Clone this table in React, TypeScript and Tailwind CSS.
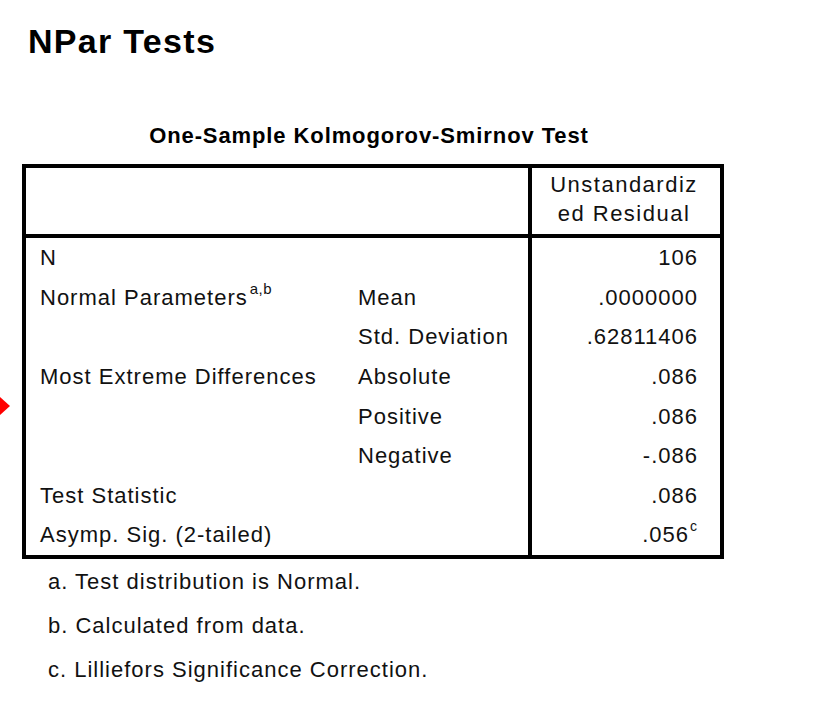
import React from "react";

type Row = {
  label: string;
  labelSup?: string;
  sub: string;
  value: string;
  valueSup?: string;
};

const ROWS: Row[] = [
  { label: "N", sub: "", value: "106" },
  { label: "Normal Parameters", labelSup: "a,b", sub: "Mean", value: ".0000000" },
  { label: "", sub: "Std. Deviation", value: ".62811406" },
  { label: "Most Extreme Differences", sub: "Absolute", value: ".086" },
  { label: "", sub: "Positive", value: ".086" },
  { label: "", sub: "Negative", value: "-.086" },
  { label: "Test Statistic", sub: "", value: ".086" },
  { label: "Asymp. Sig. (2-tailed)", sub: "", value: ".056", valueSup: "c" },
];

const NOTES = [
  "a. Test distribution is Normal.",
  "b. Calculated from data.",
  "c. Lilliefors Significance Correction.",
];

export default function App() {
  return (
    <div
      className="relative w-[816px] h-[718px] overflow-hidden bg-white text-black"
      style={{ fontFamily: '"Liberation Sans", Arial, sans-serif' }}
    >
      {/* red output marker on the left edge */}
      <div className="absolute left-0 top-[397px] w-0 h-0 border-y-[9px] border-y-transparent border-l-[10px] border-l-[#ff0000]" />

      <h1 className="pl-[28px] pt-[24px] text-[34px] leading-none font-bold tracking-[1.3px]">NPar Tests</h1>

      <div className="w-[702px] ml-[22px]">
        <div className="mt-[67px] text-center text-[22px] leading-none font-bold tracking-[0.9px] pr-[8px]">
          One-Sample Kolmogorov-Smirnov Test
        </div>

        <div className="mt-[17px] border-[4px] border-black text-[22px] tracking-[1px] text-[#111]">
          {/* header */}
          <div className="flex h-[70px] border-b-[4px] border-black">
            <div className="w-[506px] border-r-[4px] border-black" />
            <div className="flex-1 flex flex-col items-center justify-center pb-[4px] pr-[4px] leading-[29px] tracking-[1.5px]">
              <span>Unstandardiz</span>
              <span>ed Residual</span>
            </div>
          </div>

          {/* body */}
          <div className="flex">
            <div className="w-[506px] border-r-[4px] border-black flex flex-col">
              {ROWS.map((r, i) => (
                <div key={i} className="flex h-[39.6px] items-center">
                  <div className="w-[332px] pl-[14px] whitespace-nowrap">
                    {r.label}
                    {r.labelSup && (
                      <span className="relative top-[-11px] ml-[2px] text-[15px] tracking-[0.5px]">{r.labelSup}</span>
                    )}
                  </div>
                  <div className="flex-1 whitespace-nowrap">{r.sub}</div>
                </div>
              ))}
            </div>
            <div className="flex-1 flex flex-col">
              {ROWS.map((r, i) => (
                <div key={i} className="flex h-[39.6px] items-center justify-end pr-[22px] whitespace-nowrap">
                  {r.value}
                  {r.valueSup && (
                    <span className="relative top-[-9px] ml-[1px] text-[14px] leading-none">{r.valueSup}</span>
                  )}
                </div>
              ))}
            </div>
          </div>
        </div>

        <div className="mt-[11px] pl-[26px] flex flex-col gap-[20px] text-[22px] leading-[24px] tracking-[1px] text-[#111]">
          {NOTES.map((n) => (
            <div key={n}>{n}</div>
          ))}
        </div>
      </div>
    </div>
  );
}
